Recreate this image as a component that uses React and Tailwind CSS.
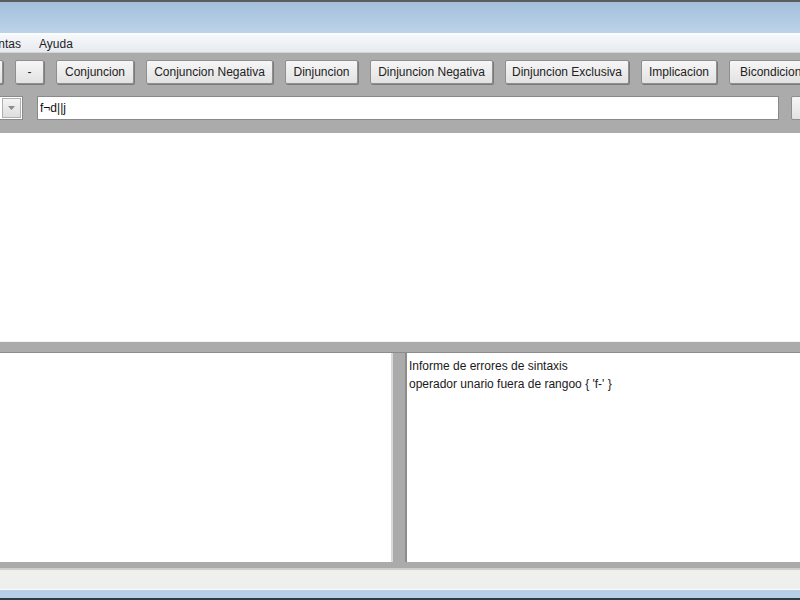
import React from "react";

const font = { fontFamily: '"Liberation Sans", Arial, sans-serif' };

function Btn({ w, children }) {
  return (
    <div
      className={`h-[24px] shrink-0 flex items-center justify-center border border-[#8f8f8f] rounded-[2px] bg-gradient-to-b from-[#f6f6f6] to-[#e2e2e2] text-[12px] text-[#222] shadow-[1px_1px_0_#7a7a7a] whitespace-nowrap overflow-hidden ${w}`}
    >
      {children}
    </div>
  );
}

export default function App() {
  const buttons = [
    ["w-[29px]", "-"],
    ["w-[78px]", "Conjuncion"],
    ["w-[127px]", "Conjuncion Negativa"],
    ["w-[73px]", "Dinjuncion"],
    ["w-[123px]", "Dinjuncion Negativa"],
    ["w-[124px]", "Dinjuncion Exclusiva"],
    ["w-[76px]", "Implicacion"],
    ["w-[90px] justify-start pl-[10px]", "Bicondicional"],
  ];
  return (
    <div className="w-[800px] h-[600px] overflow-hidden flex flex-col bg-[#ababab]" style={font}>
      <div className="h-[2px] bg-[#5c5c5c] shrink-0" />
      <div className="h-[31px] shrink-0 bg-gradient-to-b from-[#a3bfdb] to-[#bcd4ea]" />
      <div className="h-[19px] shrink-0 flex items-center border-t-[2px] border-[#fbfcfd] bg-gradient-to-b from-[#f7f8fa] to-[#e6eaf0] overflow-hidden">
        <div className="flex items-center gap-[18px] -ml-[51px] text-[12px] text-[#1e1e1e]">
          <span>Herramientas</span>
          <span>Ayuda</span>
        </div>
      </div>
      <div className="h-[1px] shrink-0 bg-[#d4d4d4]" />
      <div className="h-[80px] shrink-0 flex flex-col bg-[#ababab] overflow-hidden">
        <div className="flex gap-[12px] mt-[7px] -ml-[26px]">
          <Btn w="w-[29px]">+</Btn>
          {buttons.map(([w, t]) => (
            <Btn key={t} w={w}>{t}</Btn>
          ))}
        </div>
        <div className="flex items-center mt-[12px] -ml-[20px]">
          <div className="w-[43px] h-[24px] shrink-0 bg-white border border-[#8a8a8a] flex items-center justify-end pr-[1px]">
            <div className="w-[19px] h-[20px] bg-gradient-to-b from-[#f4f4f4] to-[#dedede] border border-[#b0b0b0] flex items-center justify-center">
              <svg width="7" height="4" viewBox="0 0 7 4"><path d="M0 0h7L3.5 4z" fill="#8a8a8a" /></svg>
            </div>
          </div>
          <div className="ml-[14px] w-[742px] h-[24px] shrink-0 bg-white border border-[#8a8a8a] flex items-center px-[2px] text-[12px] text-[#111]">
            f¬d||j
          </div>
          <div className="ml-[12px] w-[40px] h-[24px] shrink-0 border border-[#8f8f8f] rounded-[2px] bg-gradient-to-b from-[#f6f6f6] to-[#e2e2e2]" />
        </div>
      </div>
      <div className="h-[208px] shrink-0 bg-white" />
      <div className="h-[1px] shrink-0 bg-[#f2f2f2]" />
      <div className="h-[11px] shrink-0 bg-[#ababab] border-b border-[#8c8c8c]" />
      <div className="h-[209px] shrink-0 flex bg-[#ababab]">
        <div className="w-[393px] bg-white border-r-[2px] border-[#d8d8d8]" />
        <div className="w-[12px]" />
        <div className="flex-1 bg-white border-l-[2px] border-[#8c8c8c] pl-[2px] pt-[4px] text-[12px] text-[#1a1a1a] leading-[18px]">
          <div>Informe de errores de sintaxis</div>
          <div>operador unario fuera de rangoo {"{ 'f-' }"}</div>
        </div>
      </div>
      <div className="h-[6px] shrink-0 bg-[#ababab]" />
      <div className="h-[2px] shrink-0 bg-[#cfcfcf]" />
      <div className="h-[19px] shrink-0 bg-[#efefed]" />
      <div className="h-[1px] shrink-0 bg-[#f8fbfd]" />
      <div className="h-[8px] shrink-0 bg-[#b7d0e7]" />
      <div className="h-[2px] shrink-0 bg-[#2e3c44]" />
    </div>
  );
}
